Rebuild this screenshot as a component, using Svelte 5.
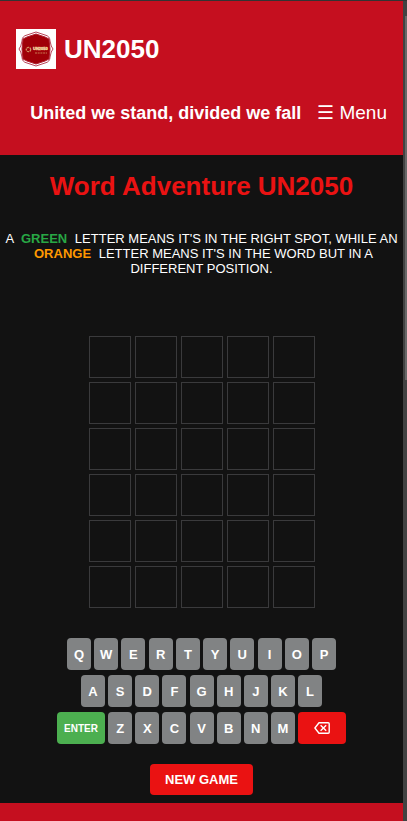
<script>
  const tiles = Array.from({ length: 30 }, (_, i) => i);
  const top = [...'QWERTYUIOP'];
  const middle = [...'ASDFGHJKL'];
  const bottom = [...'ZXCVBNM'];
</script>

<div class="page">
  <header>
    <a class="brand" href="#home">
      <svg class="logo" viewBox="0 0 40 40" aria-hidden="true">
        <rect width="40" height="40" fill="#fff" />
        <path d="M20 3 L29 6 Q34 7 34 12 Q35 18 37 20 Q35 22 34 28 Q34 33 29 34 L20 37 L11 34 Q6 33 6 28 Q5 22 3 20 Q5 18 6 12 Q6 7 11 6 Z" fill="#fff" stroke="#b8465a" stroke-width="1" />
        <path d="M20 5 L29 8 L33 10 L34 20 L33 30 L29 32 L20 35 L11 32 L7 30 L6 20 L7 10 L11 8 Z" fill="#a00008" stroke="#b02030" stroke-width="1" />
        <circle cx="12.5" cy="20.5" r="2.2" fill="none" stroke="#d09060" stroke-width="1.3" stroke-dasharray="2 .6" />
        <text x="17" y="21" font-size="4" font-weight="700" fill="#efd09a" stroke="#efd09a" stroke-width=".4">UN2050</text>
        <path d="M19 24h12" stroke="#c87850" stroke-width="1" stroke-dasharray="2 .7" />
      </svg>
      <span>UN2050</span>
    </a>
    <div class="bar">
      <strong>United we stand, divided we fall</strong>
      <button class="menu" type="button">☰ Menu</button>
    </div>
  </header>

  <main>
    <h1>Word Adventure UN2050</h1>
    <p>
      A <b class="green">GREEN</b> LETTER MEANS IT'S IN THE RIGHT SPOT, WHILE AN
      <b class="orange">ORANGE</b> LETTER MEANS IT'S IN THE WORD BUT IN A DIFFERENT POSITION.
    </p>

    <div class="board">
      {#each tiles as tile (tile)}<div class="tile"></div>{/each}
    </div>

    <div class="keyboard">
      <div class="row first">
        {#each top as letter}<button type="button">{letter}</button>{/each}
      </div>
      <div class="row second">
        {#each middle as letter}<button type="button">{letter}</button>{/each}
      </div>
      <div class="row third">
        <button class="wide enter" type="button">ENTER</button>
        {#each bottom as letter}<button type="button">{letter}</button>{/each}
        <button class="wide delete" type="button" aria-label="Delete">
          <svg width="16" height="12" viewBox="0 0 16 12" fill="none" stroke="#fff" stroke-width="1.4" stroke-linejoin="round" aria-hidden="true">
            <path d="M5 .8H14.2Q15.2 .8 15.2 1.8V10.2Q15.2 11.2 14.2 11.2H5L.9 6Z" />
            <path d="M6.6 3.2L12.2 8.8M12.2 3.2L6.6 8.8" />
          </svg>
        </button>
      </div>
    </div>

    <button class="new-game" type="button">NEW GAME</button>
  </main>

  <footer></footer>
  <div class="scrollbar"><div class="thumb"></div></div>
</div>

<style>
  :global(body) {
    margin: 0;
    background: #121212;
  }
  .page {
    position: relative;
    display: flex;
    flex-direction: column;
    min-height: 100vh;
    box-sizing: border-box;
    padding-right: 4px;
    border-top: 1px solid #333;
    background: #121212;
    color: #fff;
    font-family: 'Liberation Sans', Arial, sans-serif;
  }
  button {
    margin: 0;
    padding: 0;
    border: 0;
    color: #fff;
    font-family: inherit;
    cursor: pointer;
  }
  header {
    padding: 28px 16px;
    background: #c50f1f;
  }
  .brand {
    display: flex;
    align-items: center;
    gap: 8px;
    color: #fff;
    font-size: 26px;
    font-weight: 700;
    line-height: 40px;
    text-decoration: none;
  }
  .logo {
    width: 40px;
    height: 40px;
  }
  .bar {
    display: flex;
    justify-content: flex-end;
    align-items: center;
    gap: 16px;
    margin-top: 30px;
    line-height: 28px;
    white-space: nowrap;
  }
  .bar strong {
    font-size: 18px;
  }
  .menu {
    background: none;
    font-size: 19px;
    line-height: 28px;
  }
  main {
    display: flex;
    flex-direction: column;
    align-items: center;
    padding: 16px 4px 8px;
  }
  h1 {
    margin: 0;
    color: #ea1212;
    font-size: 26px;
    line-height: 30px;
  }
  p {
    margin: 30px 0 60px;
    font-size: 13px;
    line-height: 15px;
    text-align: center;
  }
  p b {
    padding: 0 4px;
  }
  .green {
    color: #28a745;
  }
  .orange {
    color: #ff9800;
  }
  .board {
    display: grid;
    grid-template-columns: repeat(5, 42px);
    gap: 4px;
  }
  .tile {
    box-sizing: border-box;
    height: 42px;
    border: 1px solid #3a3a3c;
  }
  .keyboard {
    display: flex;
    flex-direction: column;
    align-items: center;
    gap: 5px;
    margin-top: 30px;
  }
  .row {
    display: flex;
    justify-content: space-between;
  }
  .first {
    width: 269px;
  }
  .second {
    width: 241px;
  }
  .third {
    width: 289px;
  }
  .row button {
    width: 24px;
    height: 32px;
    border-radius: 4px;
    background: #818384;
    font-size: 13px;
    font-weight: 700;
  }
  .row .wide {
    display: flex;
    justify-content: center;
    align-items: center;
    width: 48px;
  }
  .row .enter {
    background: #4caf50;
    font-size: 10px;
  }
  .row .delete,
  .new-game {
    background: #ea1212;
  }
  .new-game {
    margin-top: 20px;
    padding: 8px 15px;
    border-radius: 4px;
    font-size: 13px;
    font-weight: 700;
    line-height: 15px;
  }
  footer {
    flex: 1;
    min-height: 18px;
    background: #c50f1f;
  }
  .scrollbar {
    position: absolute;
    top: 0;
    right: 0;
    bottom: 0;
    width: 4px;
    background: #424242;
  }
  .thumb {
    height: 364px;
    margin: 15px 0 0 2px;
    background: #686868;
  }
</style>
